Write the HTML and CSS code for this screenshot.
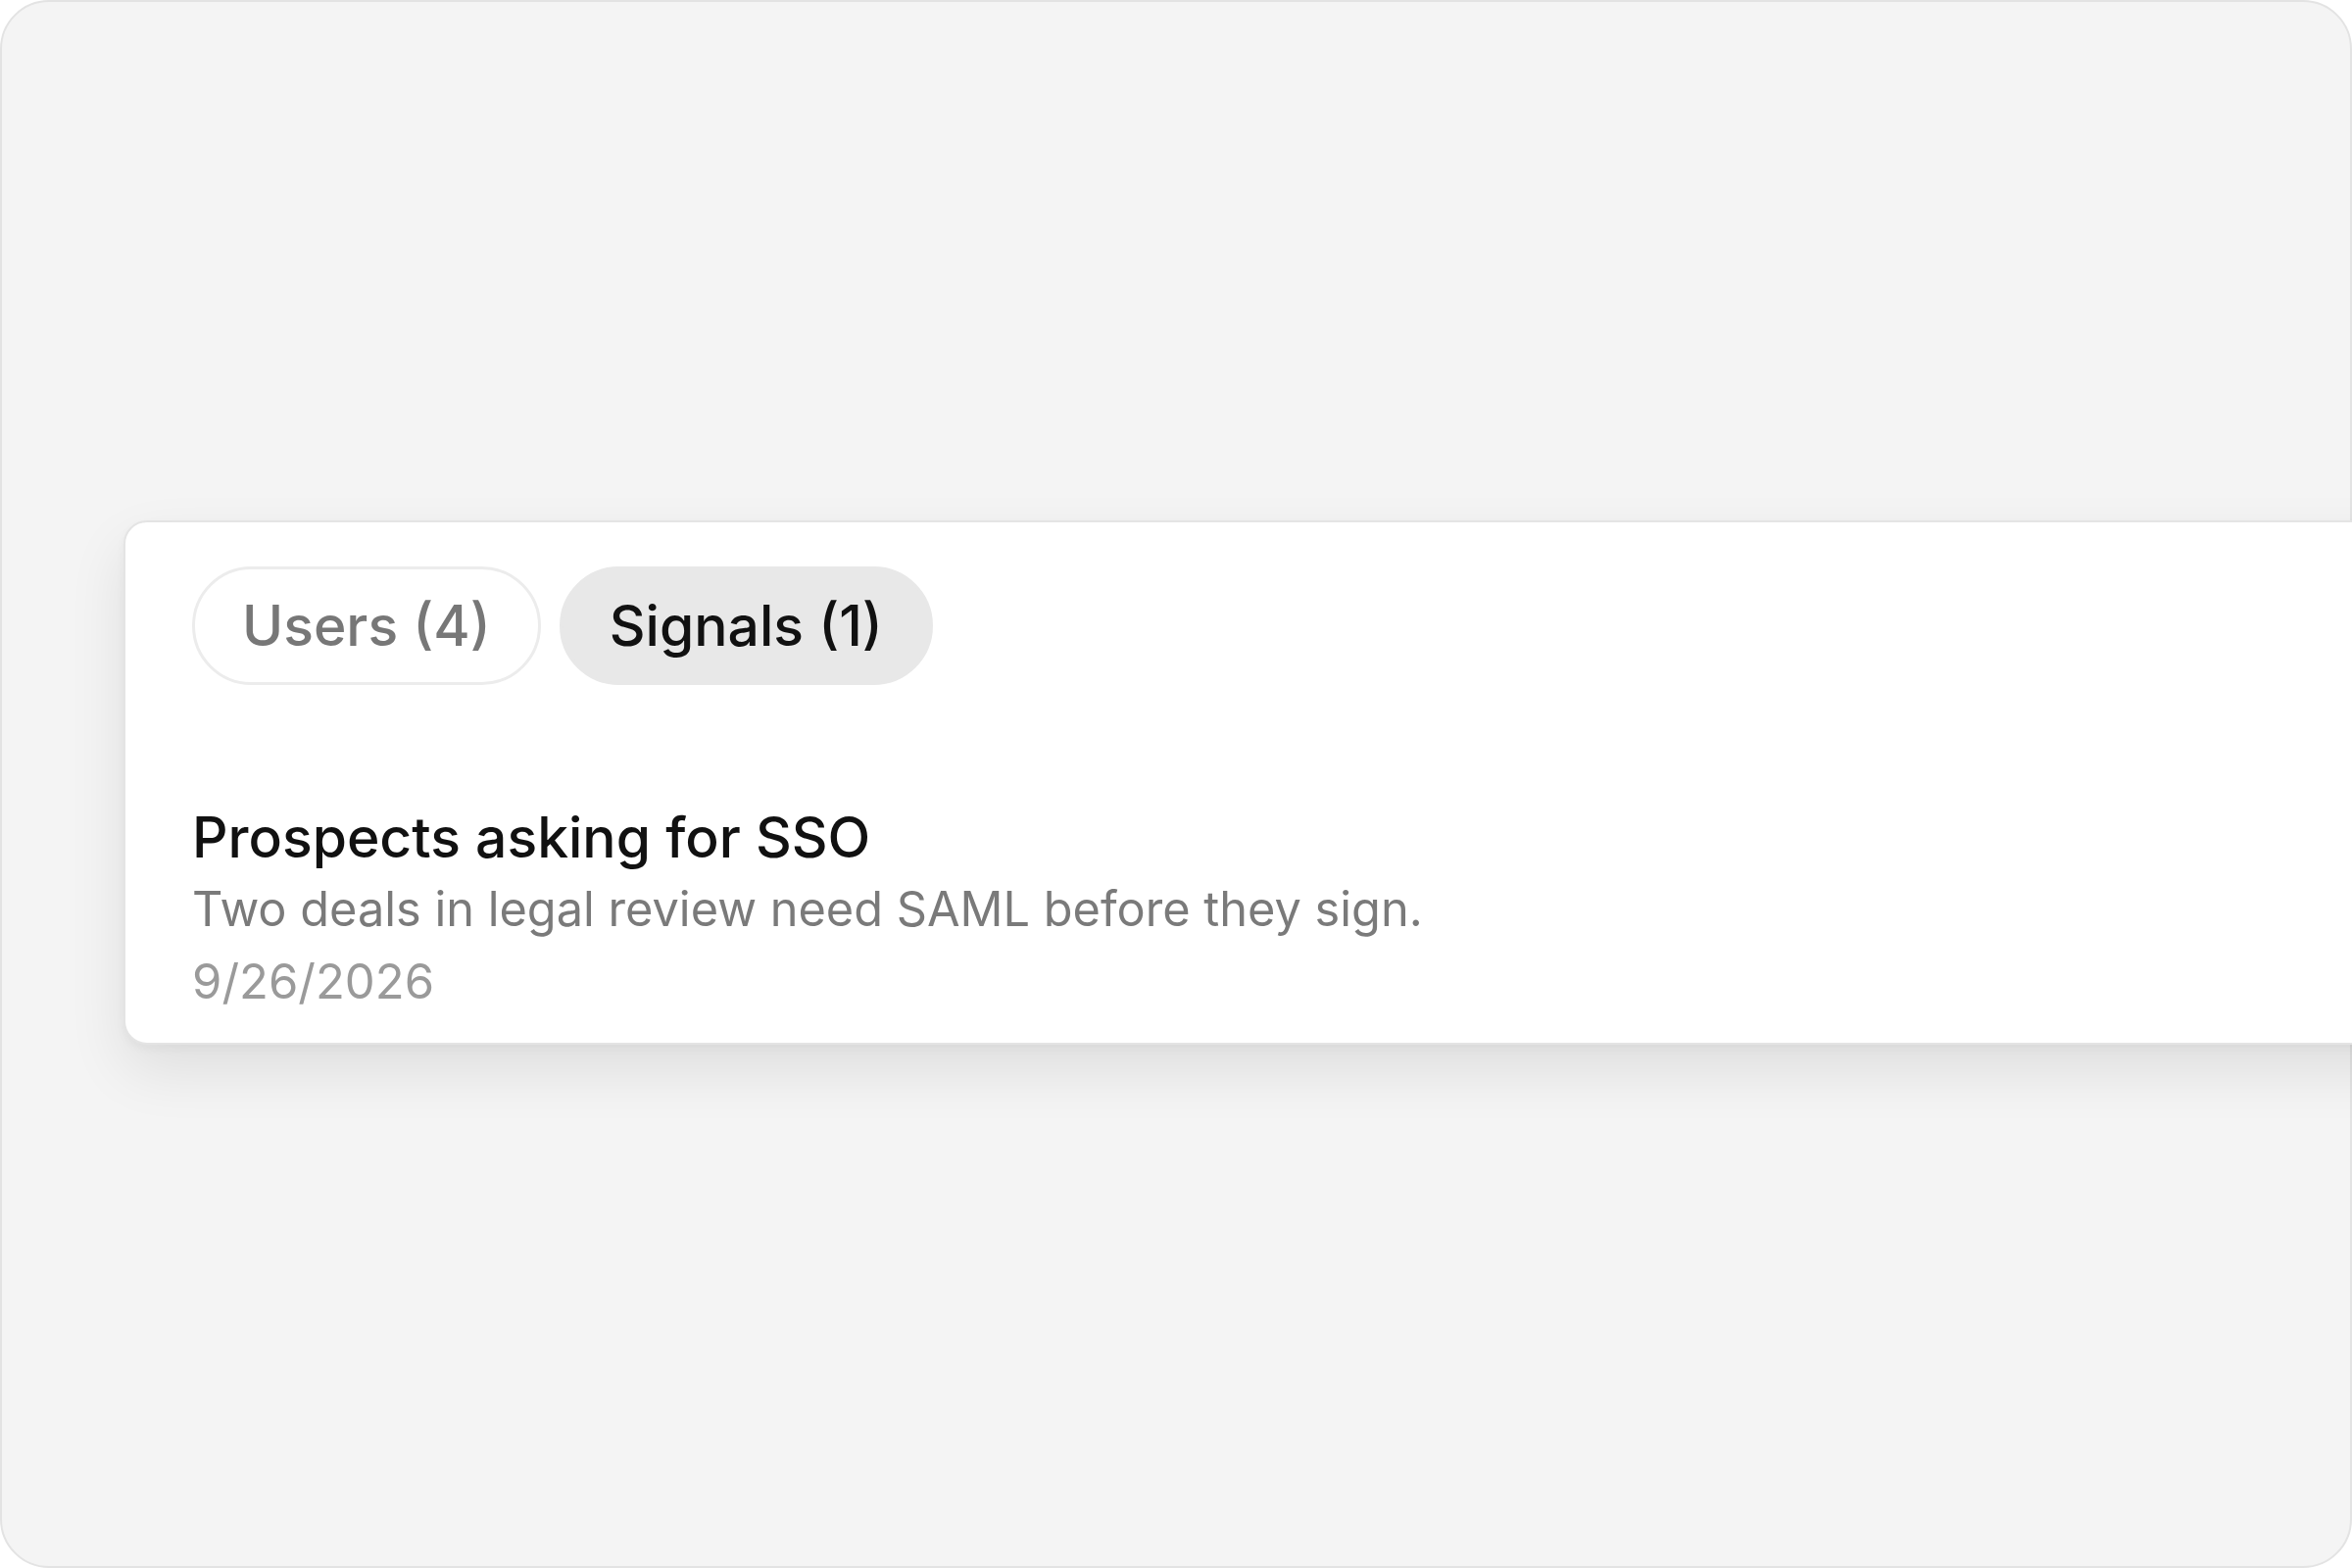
FILE: index.html
```html
<!DOCTYPE html>
<html lang="en">
<head>
    <meta charset="UTF-8">
    <meta name="viewport" content="width=device-width, initial-scale=1.0">
    <title>Signals</title>
    <link rel="stylesheet" href="styles.css">
</head>
<body>
    <div class="frame">
        <div class="panel">
            <div class="tabs">
                <button class="tab">Users (4)</button>
                <button class="tab active">Signals (1)</button>
            </div>
            <div class="signal">
                <div class="signal-title">Prospects asking for SSO</div>
                <div class="signal-text">Two deals in legal review need SAML before they sign.</div>
                <div class="signal-date">9/26/2026</div>
            </div>
        </div>
    </div>
</body>
</html>
```

FILE: styles.css
```css
html, body {
    margin: 0;
    height: 100%;
    overflow: hidden;
    background-color: #fff;
    font-family: Inter, "Noto Sans", Arial, sans-serif;
}
.frame {
    box-sizing: border-box;
    width: 2400px;
    height: 1600px;
    padding: 529px 0 0 124px;
    background-color: #f4f4f4;
    border: 2px solid #e3e3e3;
    border-radius: 50px;
}
.panel {
    width: 2400px;
    height: 535px;
    box-sizing: border-box;
    padding: 45px 68px;
    background-color: #fff;
    border: 2px solid #e4e4e4;
    border-radius: 24px;
    box-shadow: 0 26px 60px rgba(0, 0, 0, 0.09), 0 4px 10px rgba(0, 0, 0, 0.04);
}
.tabs {
    display: flex;
    gap: 19px;
}
.tab {
    height: 121px;
    padding: 0 48px;
    font-family: inherit;
    font-size: 57px;
    font-weight: 500;
    color: #777;
    background-color: #fff;
    border: 3px solid #ececec;
    border-radius: 61px;
}
.tab.active {
    color: #111;
    background-color: #e8e8e8;
    border-color: #e8e8e8;
}
.signal {
    margin-top: 119px;
    display: flex;
    flex-direction: column;
}
.signal-title {
    font-size: 57px;
    font-weight: 500;
    line-height: 73px;
    color: #111;
}
.signal-text {
    font-size: 48.7px;
    line-height: 74px;
    color: #7a7a7a;
}
.signal-date {
    font-size: 49px;
    line-height: 74px;
    color: #9a9a9a;
}
```
